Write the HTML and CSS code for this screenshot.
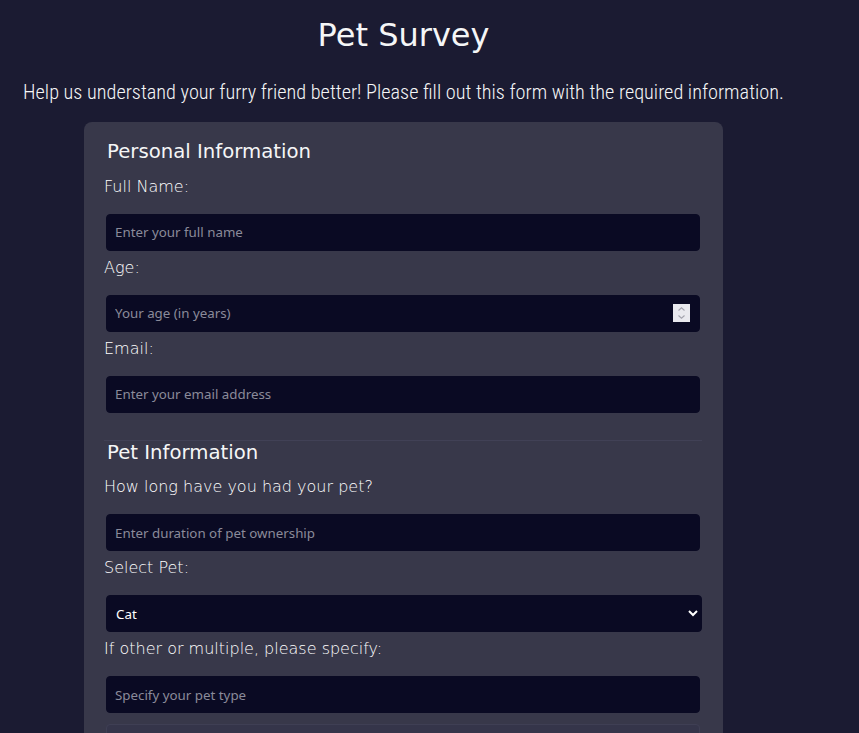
FILE: index.html
```html
<!DOCTYPE html>
<html lang="en">
<head>
<meta charset="utf-8">
<title>Pet Survey</title>
<link rel="stylesheet" href="styles.css">
</head>
<body>
<main class="page">
  <h1 class="title">Pet Survey</h1>
  <p class="intro">Help us understand your furry friend better! Please fill out this form with the required information.</p>
  <form class="card">
    <section class="section section--personal">
      <h2 class="section-title">Personal Information</h2>
      <div class="field">
        <label class="label" for="name">Full Name:</label>
        <input class="control" id="name" type="text" placeholder="Enter your full name">
      </div>
      <div class="field">
        <label class="label" for="age">Age:</label>
        <div class="number-wrap">
          <input class="control control--number" id="age" type="number" placeholder="Your age (in years)">
          <span class="spinner" aria-hidden="true">
            <svg width="17" height="18" viewBox="0 0 17 18"><rect width="17" height="18" fill="#e9e9ee"/><path d="M5.5 6.5 8.5 3.8 11.5 6.5M5.5 11.5 8.5 14.2 11.5 11.5" fill="none" stroke="#a3a3ad" stroke-width="1.1"/></svg>
          </span>
        </div>
      </div>
      <div class="field">
        <label class="label" for="email">Email:</label>
        <input class="control" id="email" type="email" placeholder="Enter your email address">
      </div>
    </section>
    <section class="section section--pet">
      <h2 class="section-title">Pet Information</h2>
      <div class="field">
        <label class="label" for="duration">How long have you had your pet?</label>
        <input class="control" id="duration" type="text" placeholder="Enter duration of pet ownership">
      </div>
      <div class="field">
        <label class="label" for="pet">Select Pet:</label>
        <select class="control control--select" id="pet">
          <option>Cat</option>
          <option>Dog</option>
          <option>Bird</option>
          <option>Other</option>
        </select>
      </div>
      <div class="field">
        <label class="label" for="other">If other or multiple, please specify:</label>
        <input class="control" id="other" type="text" placeholder="Specify your pet type">
      </div>
      <div class="choice-box"></div>
    </section>
  </form>
</main>
</body>
</html>
```
FILE: styles.css
```css
html, body {
  margin: 0;
  padding: 0;
  background: #1b1b32;
  color: #f5f6f7;
}

.page {
  width: 807px;
  padding-top: 17px;
}

.title {
  margin: 0;
  font-family: "DejaVu Sans", sans-serif;
  font-size: 32px;
  font-weight: normal;
  line-height: 37px;
  text-align: center;
  color: #f5f6f7;
}

.intro {
  margin: 27px 0 0;
  font-family: "Roboto Condensed", "Roboto", sans-serif;
  font-size: 20.3px;
  font-weight: 300;
  line-height: 23px;
  text-align: center;
  color: #f5f6f7;
  white-space: nowrap;
}

.card {
  width: 639px;
  box-sizing: border-box;
  margin: 18px auto 0;
  padding: 18px 21px 30px 20px;
  background: #38384a;
  border-radius: 8px;
}

.section {
  display: flex;
  flex-direction: column;
}

.section--personal {
  padding-bottom: 20px;
  border-bottom: 1px solid #414156;
}

.section-title {
  margin: 0 0 13.5px;
  padding: 0 3px;
  font-family: "DejaVu Sans", sans-serif;
  font-size: 19.7px;
  font-weight: normal;
  line-height: 23px;
  color: #f5f6f7;
}

.field {
  display: flex;
  flex-direction: column;
  margin-bottom: 7px;
}

.label {
  display: block;
  margin-bottom: 18px;
  font-family: "DejaVu Sans", sans-serif;
  font-size: 16px;
  font-weight: 200;
  line-height: 19px;
  color: #ffffff;
}

.control {
  box-sizing: border-box;
  height: 37px;
  width: calc(100% - 4px);
  margin: 0 0 0 2px;
  padding: 0 8px;
  border: 1px solid #0a0a23;
  border-radius: 4px;
  background: #0a0a23;
  color: #ffffff;
  font-family: "Noto Sans", sans-serif;
  font-size: 13.33px;
  outline: none;
}

.control::placeholder {
  color: #8a8a9a;
}

.number-wrap {
  position: relative;
  display: flex;
}

.control--number {
  -moz-appearance: textfield;
}

.control--number::-webkit-inner-spin-button,
.control--number::-webkit-outer-spin-button {
  -webkit-appearance: none;
  margin: 0;
}

.spinner {
  position: absolute;
  top: 9px;
  right: 12px;
  display: flex;
  width: 17px;
  height: 18px;
  pointer-events: none;
}

.control--select {
  width: calc(100% - 2px);
  padding-left: 5px;
}

.choice-box {
  height: 60px;
  margin: 4px 0 0 2px;
  width: calc(100% - 4px);
  box-sizing: border-box;
  border: 1px solid #3f3f54;
  border-radius: 4px;
  background: #35354a;
}
```
